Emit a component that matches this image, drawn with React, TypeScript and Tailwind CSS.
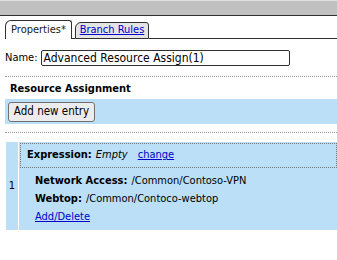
import React from "react";

export default function App() {
  const font = { fontFamily: '"DejaVu Sans Condensed", "Liberation Sans", sans-serif' };
  return (
    <div className="w-[337px] h-[260px] bg-white text-[11px] text-black overflow-hidden" style={font}>
      <div className="h-[16px] bg-[#c0c0c0] border-t border-t-[#e0e0e0] border-b border-b-[#303030]" />
      <div className="flex items-end mt-[4px] h-[19px]">
        <div className="w-[5px]" />
        <div className="h-[19px] w-[67px] border border-b-0 border-[#303030] rounded-tl-[6px] rounded-tr-[3px] bg-white flex items-center justify-center text-[#202020]">
          Properties*
        </div>
        <div className="w-[3px] h-full border-b border-[#303030]" />
        <div className="h-[17px] w-[74px] border border-[#303030] rounded-tl-[6px] rounded-tr-[3px] bg-[#e4e4e4] flex items-center justify-center">
          <span className="text-[#0000cc] underline">Branch Rules</span>
        </div>
        <div className="flex-1 h-full border-b border-[#303030]" />
      </div>
      <div className="flex items-center mt-[11px] h-[16px]">
        <span className="ml-[5px] mr-[3px]">Name:</span>
        <div className="w-[249px] h-[16px] border border-[#303030] rounded-[2px] flex items-center px-[2px] leading-none text-[12px]">
          Advanced Resource Assign(1)
        </div>
      </div>
      <div className="mt-[10px] ml-[5px] border-t border-dotted border-[#999]" />
      <div className="ml-[10px] mt-[4px] h-[16px] font-bold flex items-center">Resource Assignment</div>
      <div className="mt-[2px] ml-[5px] h-[25px] bg-[#bbdff6] flex items-center">
        <button className="ml-[3px] h-[20px] w-[87px] border border-[#707070] rounded-[3px] bg-[#ececec] flex items-center justify-center text-[11.5px]">
          Add new entry
        </button>
      </div>
      <div className="mt-[8px] ml-[5px] border-t border-dotted border-[#999]" />
      <div className="mt-[9px] ml-[6px] flex h-[88px]">
        <div className="w-[12px] bg-[#bbdff6] flex items-center justify-center">1</div>
        <div className="w-[1px]" />
        <div className="flex-1 bg-[#bbdff6] pl-[1px] pt-[1px]">
          <div className="h-[25px] border border-dotted border-[#777] flex items-center pl-[6px]">
            <span className="font-bold">Expression:</span>
            <span className="italic ml-[4px]">Empty</span>
            <span className="ml-[10px] text-[#0000cc] underline">change</span>
          </div>
          <div className="pl-[15px] mt-[5px] flex flex-col gap-[2px]">
            <div className="h-[16px] flex items-center">
              <span className="font-bold">Network Access:</span>
              <span className="ml-[4px]">/Common/Contoso-VPN</span>
            </div>
            <div className="h-[16px] flex items-center">
              <span className="font-bold">Webtop:</span>
              <span className="ml-[4px]">/Common/Contoco-webtop</span>
            </div>
            <div className="h-[16px] flex items-center">
              <span className="text-[#0000cc] underline">Add/Delete</span>
            </div>
          </div>
        </div>
      </div>
    </div>
  );
}
